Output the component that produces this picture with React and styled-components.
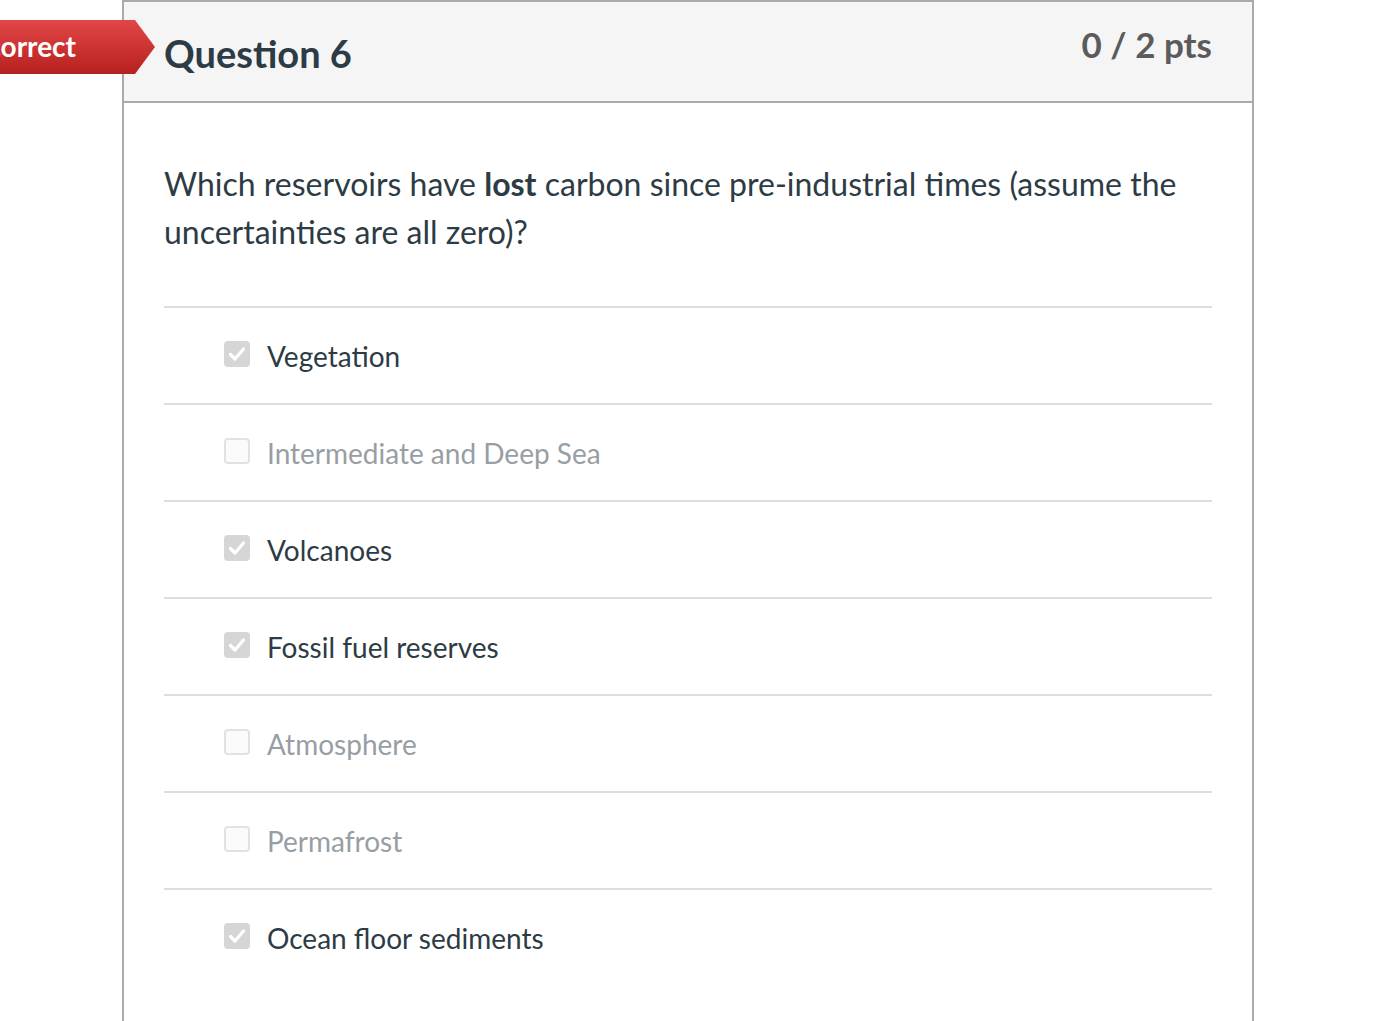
import React from 'react'
import styled, { createGlobalStyle } from 'styled-components'

const GlobalStyle = createGlobalStyle`
  html, body {
    margin: 0;
    padding: 0;
    background: #fff;
    overflow: hidden;
  }
  body {
    font-family: Lato, "Open Sans", sans-serif;
    color: #2d3b45;
  }
`

const Page = styled.div`
  padding-left: 122px;
  width: 1132px;
`

const Card = styled.div`
  position: relative;
  border: 2px solid #aaaaaa;
  border-bottom: none;
  min-height: 1019px;
  background: #fff;
`

const Header = styled.div`
  display: flex;
  justify-content: space-between;
  height: 99px;
  padding: 0 40px;
  background: #f5f5f5;
  border-bottom: 2px solid #aaaaaa;
`

const Title = styled.h2`
  margin: 0;
  padding-top: 29px;
  font-size: 38px;
  font-weight: 700;
  line-height: 1.2;
  color: #2d3b45;
`

const Points = styled.div`
  padding-top: 21px;
  font-size: 35px;
  font-weight: 700;
  line-height: 1.2;
  color: #5b5b5b;
`

const Banner = styled.div`
  position: absolute;
  top: 18px;
  right: calc(100% - 31px);
  display: flex;
  align-items: center;
  height: 54px;
  padding: 0 79px 2px 20px;
  box-sizing: border-box;
  font-size: 28px;
  font-weight: 700;
  color: #fff;
  white-space: nowrap;
  background: linear-gradient(#e34646, #b5211f);
  clip-path: polygon(0 0, calc(100% - 20px) 0, 100% 50%, calc(100% - 20px) 100%, 0 100%);
`

const Body = styled.div`
  padding: 57px 40px 0;
`

const QuestionText = styled.p`
  margin: 0 0 50px;
  font-size: 32px;
  line-height: 48px;
  color: #2d3b45;

  b {
    font-weight: 700;
  }
`

const AnswerList = styled.div`
  display: flex;
  flex-direction: column;
`

const Answer = styled.div`
  display: flex;
  align-items: center;
  gap: 17px;
  height: 95px;
  padding-left: 60px;
  border-top: 2px solid #dddddd;
  font-size: 28px;
  color: ${p => (p.$selected ? '#2d3b45' : '#979ea4')};
`

const Box = styled.span`
  box-sizing: border-box;
  display: flex;
  align-items: center;
  justify-content: center;
  width: 26px;
  height: 26px;
  margin-top: -4px;
  border-radius: 4px;
  background: ${p => (p.$checked ? '#d6d6d6' : '#fbfbfb')};
  border: ${p => (p.$checked ? 'none' : '2px solid #e2e2e2')};
`

const CheckBox = ({ checked }) => (
  <Box $checked={checked}>
    {checked && (
      <svg width="20" height="20" viewBox="0 0 20 20">
        <path d="M3.5 10.5 L8 15 L16.5 5" fill="none" stroke="#fff" strokeWidth="3.2" strokeLinecap="round" strokeLinejoin="round" />
      </svg>
    )}
  </Box>
)

const answers = [
  { text: 'Vegetation', selected: true },
  { text: 'Intermediate and Deep Sea', selected: false },
  { text: 'Volcanoes', selected: true },
  { text: 'Fossil fuel reserves', selected: true },
  { text: 'Atmosphere', selected: false },
  { text: 'Permafrost', selected: false },
  { text: 'Ocean floor sediments', selected: true }
]

export default function App() {
  return (
    <Page>
      <GlobalStyle />
      <Card>
        <Banner>Incorrect</Banner>
        <Header>
          <Title>Question 6</Title>
          <Points>0 / 2 pts</Points>
        </Header>
        <Body>
          <QuestionText>
            Which reservoirs have <b>lost</b> carbon since pre-industrial times (assume the uncertainties are all zero)?
          </QuestionText>
          <AnswerList>
            {answers.map(a => (
              <Answer key={a.text} $selected={a.selected}>
                <CheckBox checked={a.selected} />
                {a.text}
              </Answer>
            ))}
          </AnswerList>
        </Body>
      </Card>
    </Page>
  )
}
